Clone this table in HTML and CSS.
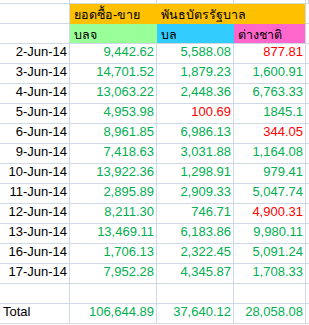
FILE: index.html
```html
<!DOCTYPE html>
<html lang="th">
<head>
<meta charset="utf-8">
<link rel="stylesheet" href="styles.css">
</head>
<body>
<div class="sheet">
  <div class="c top"></div><div class="c top"></div><div class="c top"></div><div class="c top"></div><div class="c top"></div>

  <div class="c"></div>
  <div class="c th orange span3">
    <span class="h1a">ยอดซื้อ-ขาย</span>
    <span class="h1b">พันธบัตรรัฐบาล</span>
  </div>
  <div class="c"></div>

  <div class="c"></div>
  <div class="c th green">บลจ</div>
  <div class="c th blue">บล</div>
  <div class="c th pink">ต่างชาติ</div>
  <div class="c"></div>

  <div class="c d">2-Jun-14</div><div class="c n">9,442.62</div><div class="c n">5,588.08</div><div class="c n r">877.81</div><div class="c"></div>
  <div class="c d">3-Jun-14</div><div class="c n">14,701.52</div><div class="c n">1,879.23</div><div class="c n">1,600.91</div><div class="c"></div>
  <div class="c d">4-Jun-14</div><div class="c n">13,063.22</div><div class="c n">2,448.36</div><div class="c n">6,763.33</div><div class="c"></div>
  <div class="c d">5-Jun-14</div><div class="c n">4,953.98</div><div class="c n r">100.69</div><div class="c n">1845.1</div><div class="c"></div>
  <div class="c d">6-Jun-14</div><div class="c n">8,961.85</div><div class="c n">6,986.13</div><div class="c n r">344.05</div><div class="c"></div>
  <div class="c d">9-Jun-14</div><div class="c n">7,418.63</div><div class="c n">3,031.88</div><div class="c n">1,164.08</div><div class="c"></div>
  <div class="c d">10-Jun-14</div><div class="c n">13,922.36</div><div class="c n">1,298.91</div><div class="c n">979.41</div><div class="c"></div>
  <div class="c d">11-Jun-14</div><div class="c n">2,895.89</div><div class="c n">2,909.33</div><div class="c n">5,047.74</div><div class="c"></div>
  <div class="c d">12-Jun-14</div><div class="c n">8,211.30</div><div class="c n">746.71</div><div class="c n r">4,900.31</div><div class="c"></div>
  <div class="c d">13-Jun-14</div><div class="c n">13,469.11</div><div class="c n">6,183.86</div><div class="c n">9,980.11</div><div class="c"></div>
  <div class="c d">16-Jun-14</div><div class="c n">1,706.13</div><div class="c n">2,322.45</div><div class="c n">5,091.24</div><div class="c"></div>
  <div class="c d">17-Jun-14</div><div class="c n">7,952.28</div><div class="c n">4,345.87</div><div class="c n">1,708.33</div><div class="c"></div>

  <div class="c"></div><div class="c"></div><div class="c"></div><div class="c"></div><div class="c"></div>

  <div class="c total">Total</div><div class="c n">106,644.89</div><div class="c n">37,640.12</div><div class="c n">28,058.08</div><div class="c"></div>
</div>
</body>
</html>
```

FILE: styles.css
```css
html, body {
  margin: 0;
  padding: 0;
  background: #ffffff;
}

body {
  width: 309px;
  height: 325px;
  overflow: hidden;
  font-family: "Liberation Sans", Arial, sans-serif;
}

.sheet {
  display: grid;
  grid-template-columns: 70px 87px 77px 72px 3px;
  grid-template-rows: 4px;
  grid-auto-rows: 20px;
}

.c {
  box-sizing: border-box;
  border-right: 1px solid #d0d7e5;
  border-bottom: 1px solid #d0d7e5;
  display: flex;
  align-items: flex-end;
  justify-content: flex-end;
  padding: 0 2px 4px 3px;
  font-size: 13px;
  line-height: 14px;
  white-space: nowrap;
  color: #000000;
}

.top {
  padding: 0;
}

.n {
  color: #00b050;
}

.n.r {
  color: #ff0000;
}

.total {
  justify-content: flex-start;
  padding-left: 3px;
}

.th {
  justify-content: flex-start;
  font-size: 12.5px;
  line-height: 13px;
  padding: 0 3px 1px 4px;
  color: #000000;
}

.span3 {
  grid-column: span 3;
  display: grid;
  grid-template-columns: 87px 149px;
  align-items: end;
  padding: 0 0 1px 0;
}

.h1a,
.h1b {
  padding-left: 4px;
}

.orange {
  background: #ffc000;
  border-bottom-color: #ffc000;
}

.green {
  background: #99ff99;
  border-right-color: #99ff99;
}

.blue {
  background: #33ccff;
  border-right-color: #33ccff;
}

.pink {
  background: #ff66cc;
}
```
